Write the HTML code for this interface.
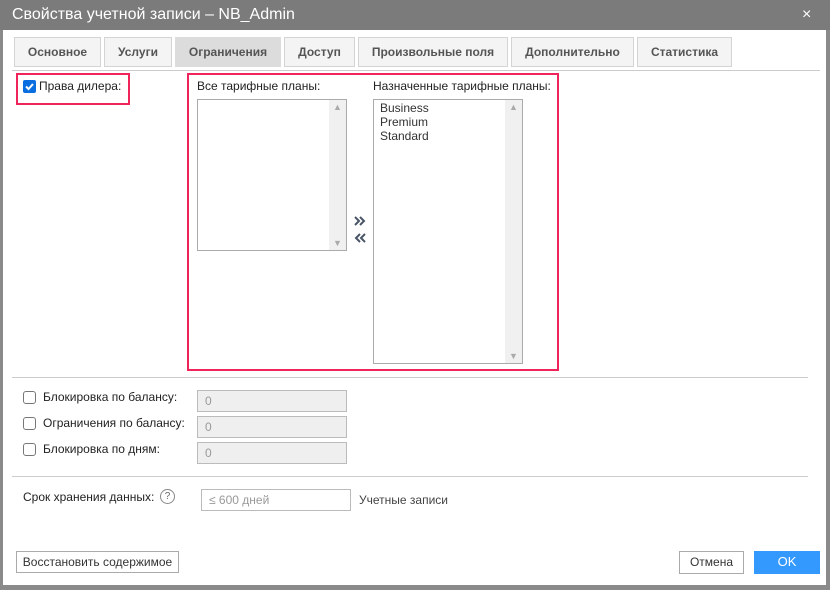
<!DOCTYPE html><html><head><meta charset="utf-8"><style>
body{margin:0;width:830px;height:590px;background:#8a8a8a;font-family:"Liberation Sans",sans-serif;font-size:12px;color:#222;position:relative;overflow:hidden}
.a{position:absolute}
.win{left:3px;top:0;width:823px;height:585px;background:#fff}
.title{left:0;top:0;width:830px;height:30px;background:#7b7b7b;color:#fff;font-size:16px;line-height:30px}
.tab{top:37px;border:1px solid #d4d4d4;background:#f4f4f4;color:#555;font-weight:bold;font-size:12px;line-height:28px;text-align:center;box-sizing:border-box;height:30px}
.red{border:2px solid #f0245a;box-sizing:border-box}
.lb{border:1px solid #aaa;background:#fff;box-sizing:border-box}
.sb{right:0;top:0;bottom:0;width:17px;background:#f0f0f0}
.cb{width:13px;height:13px;border:1px solid #777;border-radius:3px;box-sizing:border-box;background:#fff}
.inp{border:1px solid #bbb;background:#efefef;box-sizing:border-box;color:#999;padding-left:7px;line-height:20px;font-size:12px}
.btn{border:1px solid #aaa;background:#fff;box-sizing:border-box;text-align:center;color:#333;font-size:12px;line-height:20px}
.hr{height:1px;background:#ccc}
.ar{font-size:9px;color:#aaa;left:4px}
</style></head><body>
<div class="a win"></div>
<div class="a title"><span style="position:absolute;left:12px">Свойства учетной записи – NB_Admin</span><span style="position:absolute;left:802px;font-size:16px">×</span></div>
<div class="a tab" style="left:14px;width:87px">Основное</div>
<div class="a tab" style="left:104px;width:68px">Услуги</div>
<div class="a tab" style="left:175px;width:106px;background:#dcdcdc;border-color:#dcdcdc">Ограничения</div>
<div class="a tab" style="left:284px;width:71px">Доступ</div>
<div class="a tab" style="left:358px;width:150px">Произвольные поля</div>
<div class="a tab" style="left:511px;width:123px">Дополнительно</div>
<div class="a tab" style="left:637px;width:95px">Статистика</div>
<div class="a hr" style="left:12px;top:70px;width:808px"></div>
<div class="a red" style="left:16px;top:73px;width:114px;height:32px"></div>
<div class="a" style="left:23px;top:80px;width:13px;height:13px;background:#0a6ee0;border-radius:2px"><svg width="13" height="13"><path d="M3 6.5l2.5 2.5 4.5-5" stroke="#fff" stroke-width="2" fill="none"/></svg></div>
<div class="a" style="left:39px;top:79px">Права дилера:</div>
<div class="a red" style="left:187px;top:73px;width:372px;height:298px"></div>
<div class="a" style="left:197px;top:79px">Все тарифные планы:</div>
<div class="a lb" style="left:197px;top:99px;width:150px;height:152px"><div class="a sb"><div class="a ar" style="top:2px">▲</div><div class="a ar" style="bottom:2px">▼</div></div></div>
<svg class="a" style="left:352px;top:214px" width="16" height="32"><path d="M3 3l4 4-4 4M8 3l4 4-4 4" stroke="#4a5566" stroke-width="2" fill="none"/><path d="M8 20l-4 4 4 4M13 20l-4 4 4 4" stroke="#4a5566" stroke-width="2" fill="none"/></svg>
<div class="a" style="left:373px;top:79px">Назначенные тарифные планы:</div>
<div class="a lb" style="left:373px;top:99px;width:150px;height:265px"><div class="a" style="left:6px;top:1px;line-height:14px;color:#333">Business<br>Premium<br>Standard</div><div class="a sb"><div class="a ar" style="top:2px">▲</div><div class="a ar" style="bottom:2px">▼</div></div></div>
<div class="a hr" style="left:12px;top:377px;width:796px"></div>
<div class="a cb" style="left:23px;top:391px"></div><div class="a" style="left:43px;top:390px">Блокировка по балансу:</div><div class="a inp" style="left:197px;top:390px;width:150px;height:22px">0</div>
<div class="a cb" style="left:23px;top:417px"></div><div class="a" style="left:43px;top:416px">Ограничения по балансу:</div><div class="a inp" style="left:197px;top:416px;width:150px;height:22px">0</div>
<div class="a cb" style="left:23px;top:443px"></div><div class="a" style="left:43px;top:442px">Блокировка по дням:</div><div class="a inp" style="left:197px;top:442px;width:150px;height:22px">0</div>
<div class="a hr" style="left:12px;top:476px;width:796px"></div>
<div class="a" style="left:23px;top:490px">Срок хранения данных:</div>
<div class="a" style="left:160px;top:489px;width:13px;height:13px;border:1px solid #888;border-radius:50%;font-size:10px;text-align:center;line-height:13px;color:#666">?</div>
<div class="a inp" style="left:201px;top:489px;width:150px;height:22px;background:#fff">≤ 600 дней</div>
<div class="a" style="left:359px;top:493px;color:#444">Учетные записи</div>
<div class="a btn" style="left:16px;top:551px;width:163px;height:22px">Восстановить содержимое</div>
<div class="a btn" style="left:679px;top:551px;width:65px;height:23px">Отмена</div>
<div class="a btn" style="left:754px;top:551px;width:66px;height:23px;background:#3399ff;border-color:#3399ff;color:#fff;font-size:13px">OK</div>
</body></html>
